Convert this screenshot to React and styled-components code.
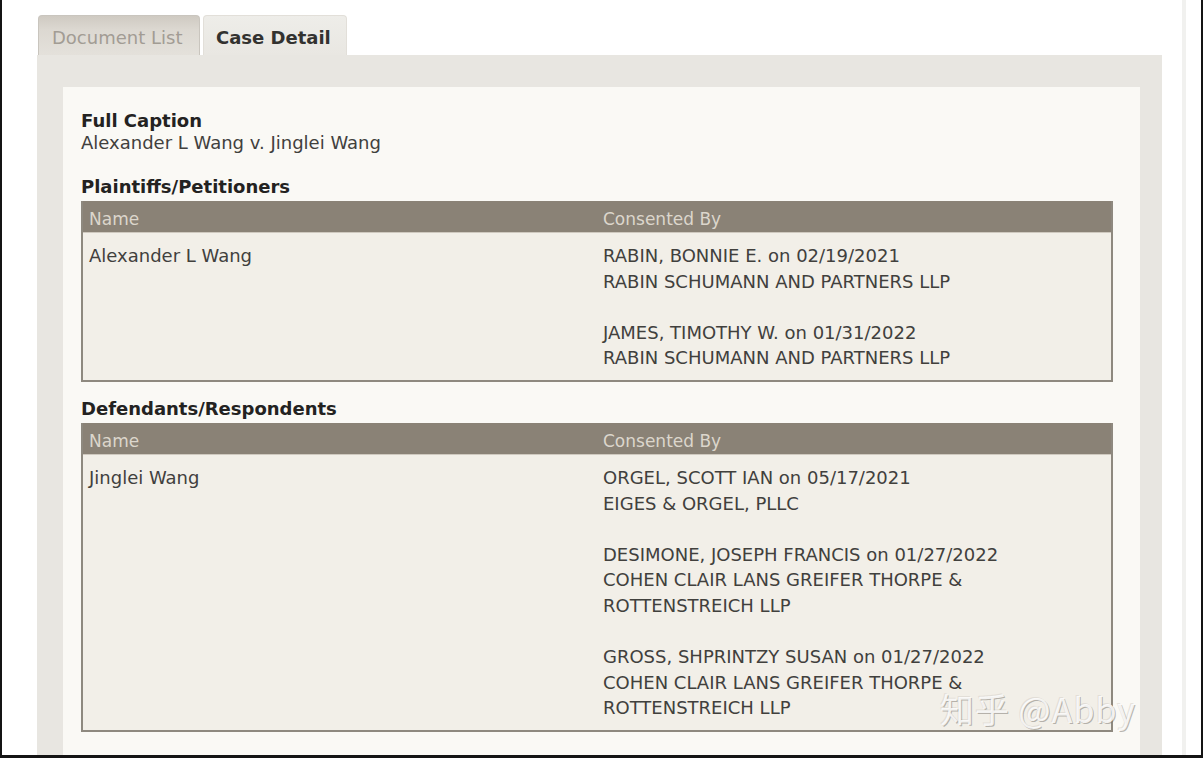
import React from 'react';
import styled, { createGlobalStyle } from 'styled-components';

const GlobalStyle = createGlobalStyle`
  html, body {
    margin: 0;
    padding: 0;
    background: #ffffff;
  }
  body {
    font-family: "DejaVu Sans", Verdana, sans-serif;
  }
`;

const plaintiffs = [
  {
    name: 'Alexander L Wang',
    consents: [
      ['RABIN, BONNIE E. on 02/19/2021', 'RABIN SCHUMANN AND PARTNERS LLP'],
      ['JAMES, TIMOTHY W. on 01/31/2022', 'RABIN SCHUMANN AND PARTNERS LLP'],
    ],
  },
];

const defendants = [
  {
    name: 'Jinglei Wang',
    consents: [
      ['ORGEL, SCOTT IAN on 05/17/2021', 'EIGES & ORGEL, PLLC'],
      ['DESIMONE, JOSEPH FRANCIS on 01/27/2022', 'COHEN CLAIR LANS GREIFER THORPE &', 'ROTTENSTREICH LLP'],
      ['GROSS, SHPRINTZY SUSAN on 01/27/2022', 'COHEN CLAIR LANS GREIFER THORPE &', 'ROTTENSTREICH LLP'],
    ],
  },
];

// --- layout ---

const Frame = styled.div`
  position: relative;
  box-sizing: border-box;
  width: 1203px;
  height: 758px;
  overflow: hidden;
  border-left: 2px solid #141414;
  border-right: 2px solid #141414;
  border-bottom: 3px solid #141414;
  display: flex;
  background: #ffffff;
`;

const Main = styled.div`
  flex: 1;
  padding: 15px 20px 0 35px;
  display: flex;
  flex-direction: column;
`;

const ScrollStrip = styled.div`
  width: 4px;
  background: #f1f1ef;
  margin-right: 15px;
`;

const TabBar = styled.div`
  display: flex;
  gap: 3px;
  padding-left: 1px;
  height: 40px;
`;

const Tab = styled.div`
  box-sizing: border-box;
  width: ${({ $w }) => $w}px;
  padding-left: ${({ $pad }) => $pad}px;
  display: flex;
  align-items: center;
  padding-top: 3px;
  border-radius: 4px 4px 0 0;
  font-size: 18px;
  border: 1px solid ${({ $active }) => ($active ? '#e2dfd9' : '#c9c5be')};
  border-bottom: none;
  color: ${({ $active }) => ($active ? '#333230' : '#a29c94')};
  font-weight: ${({ $active }) => ($active ? 'bold' : 'normal')};
  background: ${({ $active }) =>
    $active
      ? 'linear-gradient(to bottom, #eeede9, #e9e7e2)'
      : 'linear-gradient(to bottom, #cfcac2 0%, #dcd8d1 35%, #e4e1db 100%)'};
`;

const Panel = styled.div`
  flex: 1;
  background: #e8e6e1;
  padding: 32px 22px 0 26px;
  display: flex;
`;

const Inner = styled.div`
  flex: 1;
  background: #faf9f5;
  padding: 23px 27px 0 18px;
  color: #41403d;
  font-size: 18px;
`;

const Heading = styled.div`
  font-weight: bold;
  color: #232221;
  line-height: 22px;
  margin-top: ${({ $mt }) => $mt || 0}px;
`;

const Caption = styled.div`
  line-height: 22px;
`;

const Table = styled.div`
  margin-top: 3px;
  border: 2px solid #8e897f;
  border-top: none;
  background: #f2efe8;
`;

const HeadRow = styled.div`
  display: grid;
  grid-template-columns: 514px 1fr;
  height: 32px;
  align-items: center;
  background: #8a8276;
  color: #dcd6cc;
  font-size: 17px;
  border-bottom: 1px solid #cfc9bf;
  padding-top: 5px;
  box-sizing: border-box;
`;

const HeadCell = styled.div`
  padding-left: 6px;
`;

const BodyRow = styled.div`
  display: grid;
  grid-template-columns: 514px 1fr;
  padding: 10px 0 9px;
  line-height: 25.6px;
`;

const Cell = styled.div`
  padding-left: 6px;
`;

const ConsentGroup = styled.div`
  & + & {
    margin-top: 25.6px;
  }
`;

const Watermark = styled.div`
  position: absolute;
  left: 938px;
  top: 684px;
  font-family: "Noto Sans CJK SC", "DejaVu Sans", sans-serif;
  font-size: 34px;
  letter-spacing: 1px;
  color: rgba(255, 255, 255, 0.85);
  text-shadow: 1px 1px 0 rgba(120, 116, 108, 0.5), -1px -1px 0 rgba(210, 206, 198, 0.5);
`;

function PartyTable({ rows }) {
  return (
    <Table>
      <HeadRow>
        <HeadCell>Name</HeadCell>
        <HeadCell>Consented By</HeadCell>
      </HeadRow>
      {rows.map((r) => (
        <BodyRow key={r.name}>
          <Cell>{r.name}</Cell>
          <Cell>
            {r.consents.map((c, i) => (
              <ConsentGroup key={i}>
                {c.map((line) => (
                  <div key={line}>{line}</div>
                ))}
              </ConsentGroup>
            ))}
          </Cell>
        </BodyRow>
      ))}
    </Table>
  );
}

export default function App() {
  return (
    <>
      <GlobalStyle />
      <Frame>
        <Main>
          <TabBar>
            <Tab $w={162} $pad={13}>Document List</Tab>
            <Tab $w={144} $pad={12} $active>Case Detail</Tab>
          </TabBar>
          <Panel>
            <Inner>
              <Heading>Full Caption</Heading>
              <Caption>Alexander L Wang v. Jinglei Wang</Caption>
              <Heading $mt={22}>Plaintiffs/Petitioners</Heading>
              <PartyTable rows={plaintiffs} />
              <Heading $mt={16}>Defendants/Respondents</Heading>
              <PartyTable rows={defendants} />
            </Inner>
          </Panel>
        </Main>
        <ScrollStrip />
        <Watermark>知乎 @Abby</Watermark>
      </Frame>
    </>
  );
}
